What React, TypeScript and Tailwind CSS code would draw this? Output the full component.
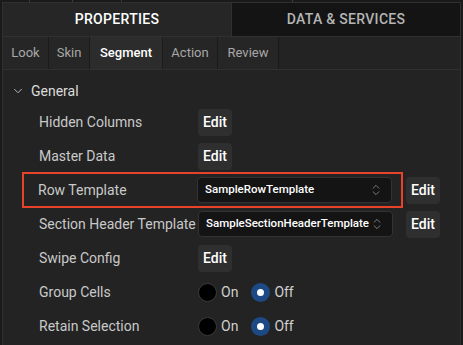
import { ChevronDown, ChevronsUpDown } from 'lucide-react';

const font = { fontFamily: 'Roboto, "Liberation Sans", sans-serif' };

function EditButton() {
  return (
    <button className="h-[27px] w-[34px] rounded-[4px] bg-[#2f2f2f] text-[14px] font-medium text-white">
      Edit
    </button>
  );
}

function SelectBox({ value }: { value: string }) {
  return (
    <div className="flex h-[26px] w-[195px] items-center justify-between rounded-[4px] border border-[#333] bg-[#141414] pl-[7px] pr-[8px]">
      <span className="text-[11.5px] font-medium text-white">{value}</span>
      <ChevronsUpDown className="h-[14px] w-[14px] text-[#8a8a8a]" strokeWidth={1.5} />
    </div>
  );
}

function Radio({ checked, label }: { checked: boolean; label: string }) {
  return (
    <div className="flex items-center gap-[4px]">
      {checked ? (
        <span className="flex h-[19px] w-[19px] items-center justify-center rounded-full bg-[#1d4a85]">
          <span className="h-[7px] w-[7px] rounded-full bg-white" />
        </span>
      ) : (
        <span className="h-[19px] w-[19px] rounded-full border border-[#3a3a3a] bg-black" />
      )}
      <span className="text-[14px] text-[#d0d0d0]">{label}</span>
    </div>
  );
}

function Row({ label, children }: { label: string; children: React.ReactNode }) {
  return (
    <div className="flex h-[34px] items-center pl-[36px]">
      <span className="w-[159px] shrink-0 text-[14px] text-[#c9c9c9]">{label}</span>
      <div className="flex items-center gap-[13px]">{children}</div>
    </div>
  );
}

export default function App() {
  const subTabs = ['Look', 'Skin', 'Segment', 'Action', 'Review'];
  const widths = ['w-[46px]', 'w-[41px]', 'w-[73px]', 'w-[55px]', 'w-[61px]'];
  return (
    <div style={font} className="flex h-[345px] w-[463px] flex-col overflow-hidden bg-[#1a1a1a] px-[2px]">
      <div className="flex h-[2px] shrink-0">
        <div className="w-[28px] border-r border-[#3a3a3a]" />
        <div className="w-[43px] border-r border-[#3a3a3a]" />
        <div className="w-[49px] border-r border-[#3a3a3a]" />
        <div className="w-[171px] border-r border-[#3a3a3a]" />
      </div>
      <div className="flex h-[35px] shrink-0 border border-[#303030]">
        <div className="flex w-[229px] items-center justify-center border-r border-[#303030] bg-[#262626] text-[14px] font-medium tracking-[0.3px] text-white">
          PROPERTIES
        </div>
        <div className="flex flex-1 items-center justify-center bg-[#141414] text-[14px] font-medium tracking-[0.3px] text-[#b5b5b5]">
          DATA &amp; SERVICES
        </div>
      </div>
      <div className="flex h-[33px] shrink-0 border-x border-b border-[#303030] bg-[#232323]">
        {subTabs.map((t, i) => (
          <div
            key={t}
            className={`flex ${widths[i]} items-center justify-center border-r border-[#1a1a1a] text-[13px] ${
              t === 'Segment' ? 'bg-[#2c2c2c] font-medium text-white' : 'bg-[#262626] text-[#a8a8a8]'
            }`}
          >
            {t}
          </div>
        ))}
      </div>
      <div className="flex-1 border-x border-[#303030] bg-[#232323] pt-[4px]">
        <div className="flex h-[34px] items-center pl-[8px]">
          <ChevronDown className="h-[14px] w-[14px] text-[#bdbdbd]" strokeWidth={1.6} />
          <span className="ml-[6px] text-[14px] text-[#dcdcdc]">General</span>
        </div>
        <div className="-mt-[3px]">
          <Row label="Hidden Columns"><EditButton /></Row>
          <Row label="Master Data"><EditButton /></Row>
          <div className="flex h-[34px] items-center">
            <div className="ml-[19px] flex h-[36px] w-[381px] items-center border-[2.5px] border-[#e8432a] pl-[14px]">
              <span className="w-[159px] shrink-0 text-[14px] text-[#c9c9c9]">Row Template</span>
              <SelectBox value="SampleRowTemplate" />
            </div>
            <div className="ml-[3px]"><EditButton /></div>
          </div>
          <Row label="Section Header Template">
            <SelectBox value="SampleSectionHeaderTemplate" />
            <EditButton />
          </Row>
          <Row label="Swipe Config"><EditButton /></Row>
          <Row label="Group Cells">
            <div className="flex gap-[13px]">
              <Radio checked={false} label="On" />
              <Radio checked label="Off" />
            </div>
          </Row>
          <Row label="Retain Selection">
            <div className="flex gap-[13px]">
              <Radio checked={false} label="On" />
              <Radio checked label="Off" />
            </div>
          </Row>
        </div>
      </div>
    </div>
  );
}
